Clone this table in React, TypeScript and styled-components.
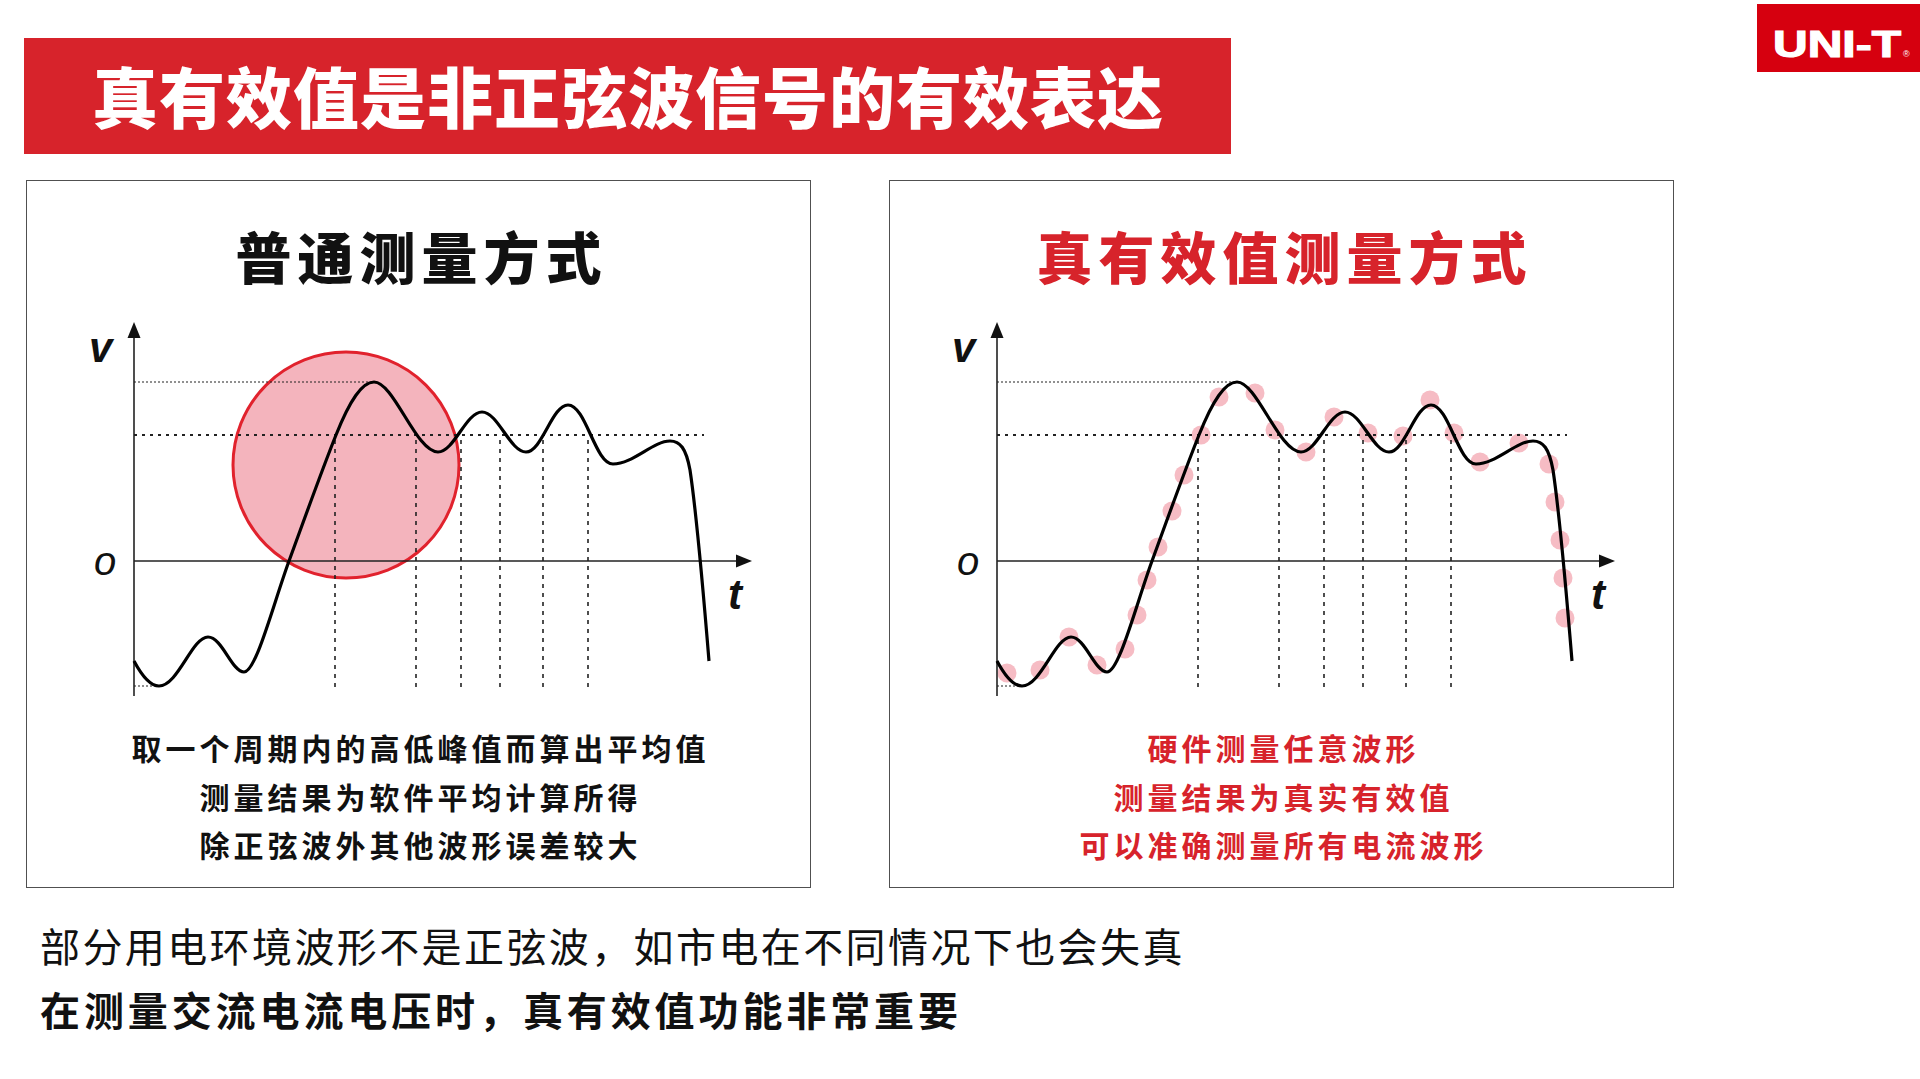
import styled, { createGlobalStyle } from 'styled-components';

const CJK = `"Noto Sans CJK SC", "Noto Sans", sans-serif`;
const RED = '#d7232b';

const GlobalStyle = createGlobalStyle`
  html, body {
    margin: 0;
    padding: 0;
    background: #ffffff;
  }
  body {
    font-family: ${CJK};
  }
`;

const Page = styled.div`
  width: 1920px;
  height: 1079px;
  overflow: hidden;
  display: flex;
  flex-direction: column;
  background: #ffffff;
`;

const Header = styled.header`
  display: flex;
  align-items: flex-start;
  padding-left: 24px;
`;

const TitleBar = styled.div`
  margin-top: 38px;
  width: 1207px;
  height: 116px;
  box-sizing: border-box;
  padding-left: 68px;
  padding-bottom: 4px;
  background: ${RED};
  display: flex;
  align-items: center;
`;

const Title = styled.h1`
  margin: 0;
  color: #ffffff;
  font-family: ${CJK};
  font-size: 66px;
  font-weight: 900;
  line-height: 1;
  letter-spacing: 1px;
  white-space: nowrap;
`;

const Logo = styled.div`
  margin-left: auto;
  margin-top: 4px;
  width: 163px;
  height: 68px;
  background: #d6000f;
  display: flex;
  align-items: center;
  justify-content: center;
`;

const Panels = styled.section`
  display: flex;
  gap: 78px;
  padding-left: 26px;
  margin-top: 26px;
`;

const Panel = styled.div`
  width: 785px;
  height: 708px;
  box-sizing: border-box;
  border: 1.5px solid #505050;
  padding-top: 40px;
  display: flex;
  flex-direction: column;
  align-items: center;
`;

const PanelTitle = styled.h2<{ $color: string }>`
  margin: 0;
  padding-left: 6px;
  color: ${(p) => p.$color};
  font-family: ${CJK};
  font-size: 56px;
  font-weight: 900;
  line-height: 67px;
  letter-spacing: 6px;
`;

const Chart = styled.svg`
  display: block;
  margin-top: 12px;
  width: 782px;
  height: 400px;
`;

const Notes = styled.div<{ $color: string }>`
  margin-top: 23px;
  display: flex;
  flex-direction: column;
  align-items: center;
  color: ${(p) => p.$color};
  font-family: ${CJK};
  font-size: 30px;
  font-weight: 700;
  line-height: 48.5px;
  letter-spacing: 4px;
  padding-left: 4px;
`;

const Footer = styled.footer`
  margin-top: 25px;
  padding-left: 40px;
`;

const FooterLine = styled.p<{ $bold?: boolean }>`
  margin: 0;
  color: #111111;
  font-family: ${CJK};
  font-size: 40px;
  line-height: 64px;
  font-weight: ${(p) => (p.$bold ? 700 : 400)};
  letter-spacing: ${(p) => (p.$bold ? '3.9px' : '2.4px')};
`;

const WAVE =
  'M106,361 C114,376 122,386 131,386 C150,386 164,337 180,337 C194,337 204,372 216,372 ' +
  'C228,372 245,305 261,261 C275,223 292,175 308,135 C322,100 334,82 346,82 ' +
  'C366,82 388,152 410,152 C426,152 438,112 454,112 C470,112 482,152 498,152 ' +
  'C514,152 524,105 540,105 C558,105 567,164 585,164 C605,164 625,141 642,141 ' +
  'C652,141 658,148 662,170 C668,210 676,300 681,361';

const SAMPLE_X = [307, 388, 433, 472, 515, 560];

const DOTS: [number, number][] = [
  [116, 373], [149, 370], [178, 337], [206, 365], [234, 349], [246, 315],
  [256, 280], [267, 247], [281, 211], [293, 175], [310, 135], [328, 97],
  [364, 93], [384, 130], [415, 152], [443, 117], [477, 133], [512, 136],
  [539, 100], [563, 133], [589, 162], [628, 143], [658, 164], [664, 202],
  [669, 240], [672, 278], [674, 318],
];

function WaveChart({ mode }: { mode: 'average' | 'rms' }) {
  return (
    <Chart viewBox="0 0 782 400">
      {mode === 'average' && (
        <circle cx={318} cy={165} r={113} fill="#f4b4bd" stroke="#e1222d" strokeWidth={3} />
      )}
      {mode === 'rms' &&
        DOTS.map(([x, y], i) => <circle key={i} cx={x} cy={y} r={9.5} fill="#f6bcc4" />)}

      {/* reference levels */}
      <line x1={106} y1={82} x2={346} y2={82} stroke="#222" strokeWidth={1.2} strokeDasharray="2 2" />
      <line x1={106} y1={135} x2={676} y2={135} stroke="#222" strokeWidth={2} strokeDasharray="3 5" />
      <line x1={106} y1={386} x2={128} y2={386} stroke="#222" strokeWidth={1.2} strokeDasharray="2 2" />
      {SAMPLE_X.map((x) => (
        <line key={x} x1={x} y1={140} x2={x} y2={388} stroke="#222" strokeWidth={1.6} strokeDasharray="4 5" />
      ))}

      {/* axes */}
      <line x1={106} y1={32} x2={106} y2={396} stroke="#222" strokeWidth={1.6} />
      <polygon points="106,22 99.5,38 112.5,38" fill="#111" />
      <line x1={106} y1={261} x2={712} y2={261} stroke="#222" strokeWidth={1.6} />
      <polygon points="724,261 708,254.5 708,267.5" fill="#111" />

      <path d={WAVE} fill="none" stroke="#000" strokeWidth={3.2} strokeLinejoin="round" />

      <text x={61} y={62} fontFamily='"Liberation Sans", Arial, sans-serif' fontSize={42} fontStyle="italic" fontWeight={700} fill="#111">
        v
      </text>
      <text x={66} y={275} fontFamily='"Liberation Sans", Arial, sans-serif' fontSize={40} fontStyle="italic" fill="#111">
        o
      </text>
      <text x={700} y={309} fontFamily='"Liberation Sans", Arial, sans-serif' fontSize={42} fontStyle="italic" fontWeight={700} fill="#111">
        t
      </text>
    </Chart>
  );
}

function UniTLogo() {
  return (
    <svg width="163" height="68" viewBox="0 0 163 68">
      <text
        x={16}
        y={53}
        textLength={128}
        lengthAdjust="spacingAndGlyphs"
        fontFamily='"Liberation Sans", Arial, sans-serif'
        fontWeight={700}
        fontSize={37}
        fill="#ffffff"
        stroke="#ffffff"
        strokeWidth={1.2}
      >
        UNI-T
      </text>
      <text x={146} y={53} fontFamily='"Liberation Sans", Arial, sans-serif' fontSize={9} fill="#ffffff">
        ®
      </text>
    </svg>
  );
}

export default function App() {
  return (
    <>
      <GlobalStyle />
      <Page>
        <Header>
          <TitleBar>
            <Title>真有效值是非正弦波信号的有效表达</Title>
          </TitleBar>
          <Logo>
            <UniTLogo />
          </Logo>
        </Header>

        <Panels>
          <Panel>
            <PanelTitle $color="#111111">普通测量方式</PanelTitle>
            <WaveChart mode="average" />
            <Notes $color="#111111">
              <span>取一个周期内的高低峰值而算出平均值</span>
              <span>测量结果为软件平均计算所得</span>
              <span>除正弦波外其他波形误差较大</span>
            </Notes>
          </Panel>
          <Panel>
            <PanelTitle $color={RED}>真有效值测量方式</PanelTitle>
            <WaveChart mode="rms" />
            <Notes $color={RED}>
              <span>硬件测量任意波形</span>
              <span>测量结果为真实有效值</span>
              <span>可以准确测量所有电流波形</span>
            </Notes>
          </Panel>
        </Panels>

        <Footer>
          <FooterLine>部分用电环境波形不是正弦波，如市电在不同情况下也会失真</FooterLine>
          <FooterLine $bold>在测量交流电流电压时，真有效值功能非常重要</FooterLine>
        </Footer>
      </Page>
    </>
  );
}
